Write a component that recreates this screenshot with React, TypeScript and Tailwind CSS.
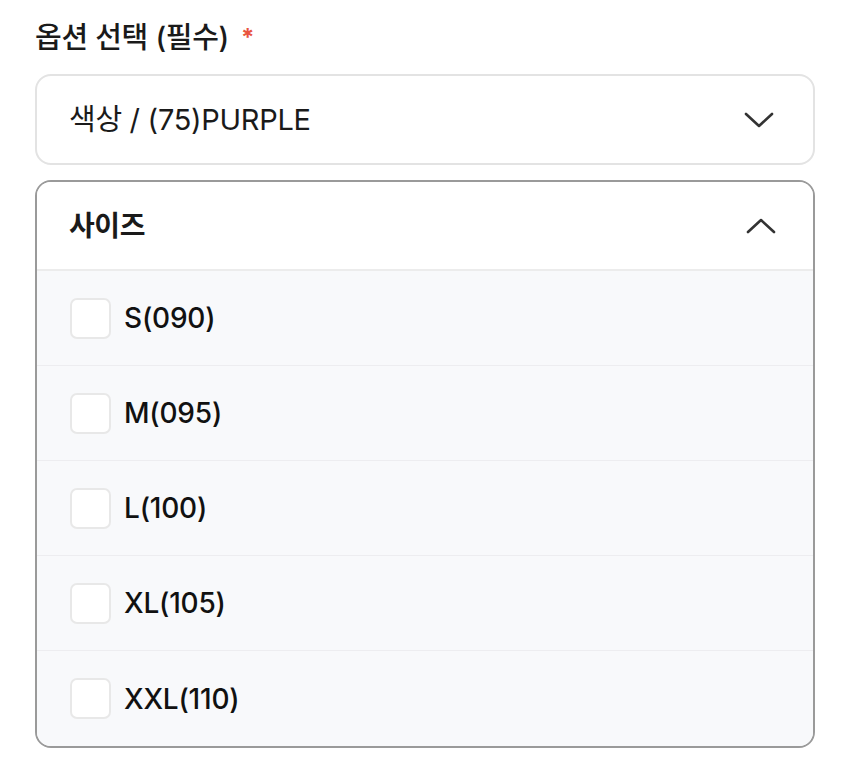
import React from "react";

const sizes = ["S(090)", "M(095)", "L(100)", "XL(105)", "XXL(110)"];

function ChevronDown() {
  return (
    <svg width="32" height="20" viewBox="0 0 32 20" fill="none">
      <path d="M3 4 L16 16 L29 4" stroke="#333" strokeWidth="2.6" strokeLinecap="round" strokeLinejoin="round" />
    </svg>
  );
}

function ChevronUp() {
  return (
    <svg width="32" height="20" viewBox="0 0 32 20" fill="none">
      <path d="M3 16 L16 4 L29 16" stroke="#333" strokeWidth="2.6" strokeLinecap="round" strokeLinejoin="round" />
    </svg>
  );
}

export default function App() {
  return (
    <div
      className="w-[850px] h-[777px] bg-white px-[35px] pt-[18px]"
      style={{ fontFamily: 'Inter, "Noto Sans CJK KR", sans-serif' }}
    >
      <div className="flex items-center h-[40px] text-[29px] font-medium text-[#1a1a1a] tracking-[-0.3px]">
        <span>옵션 선택 (필수)</span>
        <span className="ml-[12px] text-[#e8543f] text-[24px] font-bold">*</span>
      </div>
      <div className="mt-[16px] h-[91px] border-2 border-[#e3e3e3] rounded-[16px] flex items-center justify-between pl-[32px] pr-[38px]">
        <span className="text-[29px] text-[#1a1a1a] tracking-[-0.3px]">색상 / (75)PURPLE</span>
        <ChevronDown />
      </div>
      <div className="mt-[15px] border-2 border-[#9a9a9a] rounded-[16px] overflow-hidden">
        <div className="h-[89px] bg-white flex items-center justify-between pl-[32px] pr-[36px] border-b-2 border-[#ececec]">
          <span className="text-[28px] font-bold text-[#1a1a1a] tracking-[-0.4px]">사이즈</span>
          <ChevronUp />
        </div>
        <div className="bg-[#f8f9fb]">
          {sizes.map((s, i) => (
            <div
              key={s}
              className={`h-[95px] flex items-center pl-[33px] ${i < sizes.length - 1 ? "border-b border-[#ededf0]" : ""}`}
            >
              <div className="w-[41px] h-[41px] rounded-[7px] border-2 border-[#e8e8e8] bg-white" />
              <span className="ml-[13px] text-[28px] font-medium text-[#111] tracking-[-0.2px]">{s}</span>
            </div>
          ))}
        </div>
      </div>
    </div>
  );
}
